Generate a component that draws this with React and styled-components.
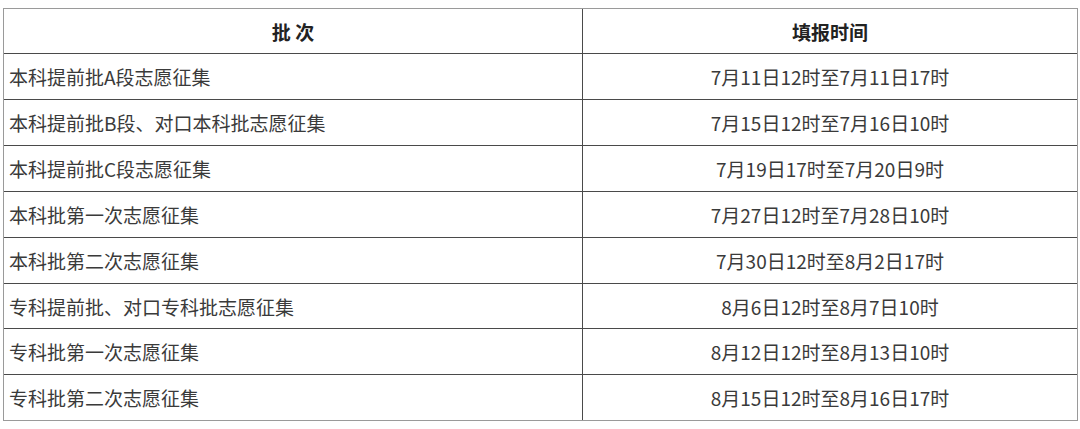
import React from "react";
import styled, { createGlobalStyle } from "styled-components";

const Global = createGlobalStyle`
  html, body { margin: 0; padding: 0; background: #fff; }
  body { font-family: "Noto Sans CJK SC", "Noto Sans", sans-serif; }
`;

const Page = styled.div`
  padding: 8px 4px 8px 3px;
  background: #fff;
`;

const Table = styled.table`
  width: 1073px;
  border-collapse: separate;
  border-spacing: 0;
  border: 1px solid #9a9a9a;
  table-layout: fixed;
  color: #333;
  font-size: 19px;
`;

const Col = styled.col`
  width: ${(p) => p.$w}px;
`;

const Cell = styled.td`
  height: ${(p) => p.$h}px;
  padding: 0 5px;
  box-sizing: border-box;
  text-align: ${(p) => (p.$center ? "center" : "left")};
  vertical-align: middle;
  font-weight: ${(p) => (p.$head ? 700 : 400)};
  color: ${(p) => (p.$head ? "#222" : "#3a3a3a")};
  border-right: ${(p) => (p.$last ? "none" : "1px solid #4a4a4a")};
  border-bottom: ${(p) => (p.$bottom ? "none" : "1px solid #4a4a4a")};
  white-space: nowrap;
  line-height: 1;
`;

const rows = [
  ["本科提前批A段志愿征集", "7月11日12时至7月11日17时"],
  ["本科提前批B段、对口本科批志愿征集", "7月15日12时至7月16日10时"],
  ["本科提前批C段志愿征集", "7月19日17时至7月20日9时"],
  ["本科批第一次志愿征集", "7月27日12时至7月28日10时"],
  ["本科批第二次志愿征集", "7月30日12时至8月2日17时"],
  ["专科提前批、对口专科批志愿征集", "8月6日12时至8月7日10时"],
  ["专科批第一次志愿征集", "8月12日12时至8月13日10时"],
  ["专科批第二次志愿征集", "8月15日12时至8月16日17时"],
];

export default function App() {
  return (
    <Page>
      <Global />
      <Table>
        <colgroup>
          <Col $w={579} />
          <Col $w={494} />
        </colgroup>
        <thead>
          <tr>
            <Cell as="th" $h={45} $head $center>批 次</Cell>
            <Cell as="th" $h={45} $head $center $last>填报时间</Cell>
          </tr>
        </thead>
        <tbody>
          {rows.map(([a, b], i) => {
            const last = i === rows.length - 1;
            const h = i === 5 ? 45 : last ? 45 : 46;
            return (
              <tr key={i}>
                <Cell $h={h} $bottom={last}>{a}</Cell>
                <Cell $h={h} $center $last $bottom={last}>{b}</Cell>
              </tr>
            );
          })}
        </tbody>
      </Table>
    </Page>
  );
}
